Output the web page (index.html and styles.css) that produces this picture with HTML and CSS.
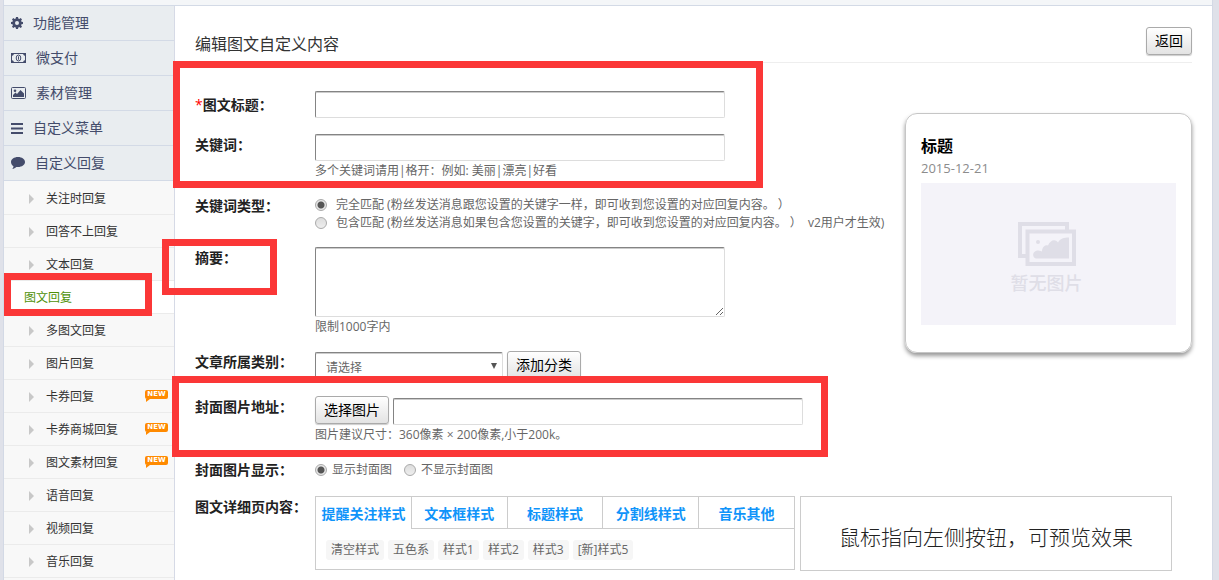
FILE: index.html
```html
<!DOCTYPE html>
<html lang="zh-CN">
<head>
    <meta charset="UTF-8">
    <title>编辑图文自定义内容</title>
    <link rel="stylesheet" href="styles.css">
</head>
<body>
    <div class="container">
        <div class="topbar"></div>
        <div class="wrap">
            <nav class="sidebar">
                <a class="menu" href="#">
                    <svg width="12" height="12" viewBox="0 0 12 12"><path fill="currentColor" fill-rule="evenodd" d="M5 0h2l.3 1.6 1 .4 1.4-.9 1.3 1.3-.9 1.4.4 1L12 5v2l-1.5.3-.4 1 .9 1.4L9.700 11l-1.400-.9-1 .4L7 12H5l-.3-1.500-1-.4-1.400.9L1 9.700l.9-1.400-.4-1L0 7V5l1.500-.3.4-1L1 2.400 2.300 1.100l1.400.9 1-.4zM6 4a2 2 0 1 0 0 4 2 2 0 0 0 0-4z"/></svg>
                    功能管理</a>
                <a class="menu" href="#">
                    <svg width="15" height="10" viewBox="0 0 15 10"><path fill="none" stroke="currentColor" d="M.5.5h14v9H.5z"/><path fill="currentColor" d="M0 0h3a3 3 0 0 1-3 3zM15 0h-3a3 3 0 0 0 3 3zM0 10h3a3 3 0 0 0-3-3zM15 10h-3a3 3 0 0 1 3-3z"/><ellipse cx="7.500" cy="5" rx="2.300" ry="3" fill="none" stroke="currentColor"/><path stroke="currentColor" d="M7.500 3.300v3.400"/></svg>
                    微支付</a>
                <a class="menu" href="#">
                    <svg width="15" height="12" viewBox="0 0 15 12"><rect x=".5" y=".5" width="14" height="11" rx="1" fill="none" stroke="currentColor"/><circle cx="4" cy="3.800" r="1.300" fill="currentColor"/><path fill="currentColor" d="M2 10V8l2.500-2.500L6 7l3.500-4L13 6.500V10z"/></svg>
                    素材管理</a>
                <a class="menu" href="#">
                    <svg width="12" height="11" viewBox="0 0 12 11"><path fill="currentColor" d="M0 0h12v2H0zM0 4.500h12v2H0zM0 9h12v2H0z"/></svg>
                    自定义菜单</a>
                <a class="menu" href="#">
                    <svg width="14" height="12" viewBox="0 0 14 12"><path fill="currentColor" d="M7 0c4 0 7 2.200 7 5s-3 5-7 5c-.6 0-1.200 0-1.700-.1C4.200 11 3 11.700 1.300 12c.7-.8 1.100-1.600 1.200-2.800C1 8.300 0 6.700 0 5c0-2.800 3-5 7-5z"/></svg>
                    自定义回复</a>
                <div class="submenu">
                    <a href="#">关注时回复</a>
                    <a href="#">回答不上回复</a>
                    <a href="#">文本回复</a>
                    <a href="#" class="active">图文回复</a>
                    <a href="#">多图文回复</a>
                    <a href="#">图片回复</a>
                    <a href="#">卡券回复<span class="new">NEW</span></a>
                    <a href="#">卡券商城回复<span class="new">NEW</span></a>
                    <a href="#">图文素材回复<span class="new">NEW</span></a>
                    <a href="#">语音回复</a>
                    <a href="#">视频回复</a>
                    <a href="#">音乐回复</a>
                </div>
            </nav>

            <form class="main">
                <div class="header">
                    <h1>编辑图文自定义内容</h1>
                    <button type="button" class="btn">返回</button>
                </div>
                <div class="upper">
                    <div class="fields">
                        <div class="row row-center">
                            <label class="name" for="title"><span class="required">*</span>图文标题：</label>
                            <div class="field"><input type="text" class="text" id="title"></div>
                        </div>
                        <div class="row">
                            <label class="name" for="keyword">关键词：</label>
                            <div class="field">
                                <input type="text" class="text" id="keyword">
                                <p class="help">多个关键词请用|格开：例如: 美丽|漂亮|好看</p>
                            </div>
                        </div>
                        <div class="row">
                            <span class="name">关键词类型：</span>
                            <div class="field options">
                                <label class="option"><input type="radio" name="type" checked>完全匹配 (粉丝发送消息跟您设置的关键字一样，即可收到您设置的对应回复内容。 ）</label>
                                <label class="option"><input type="radio" name="type">包含匹配 (粉丝发送消息如果包含您设置的关键字，即可收到您设置的对应回复内容。 ）&nbsp; v2用户才生效)</label>
                            </div>
                        </div>
                        <div class="row">
                            <label class="name" for="summary">摘要：</label>
                            <div class="field">
                                <textarea class="text" id="summary"></textarea>
                                <p class="help">限制1000字内</p>
                            </div>
                        </div>
                        <div class="row">
                            <label class="name" for="category">文章所属类别：</label>
                            <div class="field inline">
                                <span class="select"><select id="category"><option>请选择</option></select></span>
                                <button type="button" class="btn">添加分类</button>
                            </div>
                        </div>
                        <div class="row">
                            <label class="name" for="cover">封面图片地址：</label>
                            <div class="field">
                                <div class="inline">
                                    <button type="button" class="btn">选择图片</button>
                                    <input type="text" class="text cover-input" id="cover">
                                </div>
                                <p class="help">图片建议尺寸：360像素 × 200像素,小于200k。</p>
                            </div>
                        </div>
                        <div class="row row-center">
                            <span class="name">封面图片显示：</span>
                            <div class="field choices">
                                <label><input type="radio" name="show" checked>显示封面图</label>
                                <label><input type="radio" name="show">不显示封面图</label>
                            </div>
                        </div>
                    </div>

                    <div class="preview">
                        <h2>标题</h2>
                        <p class="date">2015-12-21</p>
                        <div class="picture">
                            <svg width="58" height="44" viewBox="0 0 58 44">
                                <path fill="none" stroke="currentColor" stroke-width="4" d="M8 34H2V2h47v6"/>
                                <path fill="none" stroke="currentColor" stroke-width="4" d="M9.500 9.500h46.500v32.500h-46.500z"/>
                                <circle cx="20" cy="20" r="2" fill="currentColor"/>
                                <path fill="currentColor" d="M18 36.500c-4-1-4-7 1-8 2 0 3 0 5 1 0-4 3-7 6-6 2-5 7-7 10-3 2-4 6-5 11-5v21z"/>
                            </svg>
                            <span>暂无图片</span>
                        </div>
                    </div>
                </div>

                <div class="row">
                    <span class="name">图文详细页内容：</span>
                    <div class="styles">
                        <div class="tabs">
                            <button type="button" class="current">提醒关注样式</button>
                            <button type="button">文本框样式</button>
                            <button type="button">标题样式</button>
                            <button type="button">分割线样式</button>
                            <button type="button">音乐其他</button>
                        </div>
                        <div class="chips">
                            <button type="button">清空样式</button>
                            <button type="button">五色系</button>
                            <button type="button">样式1</button>
                            <button type="button">样式2</button>
                            <button type="button">样式3</button>
                            <button type="button">[新]样式5</button>
                        </div>
                    </div>
                    <div class="hover-preview">鼠标指向左侧按钮，可预览效果</div>
                </div>
            </form>
        </div>

        <div class="mark mark-title"></div>
        <div class="mark mark-summary"></div>
        <div class="mark mark-menu"></div>
        <div class="mark mark-cover"></div>
    </div>
</body>
</html>
```

FILE: styles.css
```css
* { box-sizing: border-box; }
body { margin: 0; background: #dfe1e9; color: #666; font: 12px/18px "Open Sans", "Noto Sans CJK SC", sans-serif; overflow: hidden; }
h1, h2, p { margin: 0; }
a { text-decoration: none; }
button, input, select, textarea { font-family: inherit; }

.container { position: relative; display: flex; flex-direction: column; min-height: 100vh; margin: 0 6px 0 3px; border: solid #d3d9e5; border-width: 0 1px; background: #fff; }
.topbar { height: 6px; background: #f4f6f8; border-bottom: 1px solid #d3dae6; }
.wrap { display: flex; flex: 1; }

/* sidebar */
.sidebar { flex: none; width: 171px; background: #f8f8f8; border-right: 1px solid #d6dae6; }
.menu { display: flex; align-items: center; gap: 10px; height: 35px; padding-left: 7px; background: #e9edf0; border-bottom: 1px solid #d3dae6; color: #444c6b; font-size: 14px; }
.submenu { padding-top: 1px; }
.submenu a { position: relative; display: flex; align-items: center; height: 33px; padding: 2px 0 0 42px; border-bottom: 1px solid #ebebeb; color: #333; }
.submenu a::before { content: ""; position: absolute; left: 25px; border: solid transparent; border-width: 5px 0 5px 5px; border-left-color: #c8c8c8; }
.submenu a.active { padding-left: 20px; background: #fff; color: #4f9108; }
.submenu a.active::before { display: none; }
.new { position: absolute; right: 6px; top: 10px; width: 23px; height: 9px; border-radius: 2px; background: #ff8a00; color: #fff; font: bold 7px/9px "DejaVu Sans", sans-serif; text-align: center; }
.new::after { content: ""; position: absolute; left: 1px; top: 9px; border: solid transparent; border-width: 3px 4px 0 0; border-top-color: #ff8a00; }

/* main */
.main { flex: 1; min-width: 0; padding: 21px 20px 8px; }
.header { display: flex; align-items: flex-end; justify-content: space-between; padding-bottom: 7px; border-bottom: 1px solid #eee; }
.header h1 { color: #333; font-size: 16px; font-weight: normal; line-height: 22px; }
.btn { flex: none; height: 28px; padding: 0 8px; border: 1px solid #aaa; border-radius: 3px; background: linear-gradient(#fff, #e3e3e3); box-shadow: 0 1px 1px #ccc; color: #000; font-size: 14px; line-height: 24px; }

.upper { display: flex; justify-content: space-between; padding-top: 28px; }
.fields { flex: 1; }
.row { display: flex; margin-bottom: 16px; }
.fields .row:last-child { margin-bottom: 15px; }
.row-center { align-items: center; }
.name { flex: none; width: 120px; color: #222; font-size: 14px; font-weight: bold; line-height: 22px; }
.required { color: red; font-weight: normal; }
.text { display: block; width: 410px; height: 27px; padding: 3px; border: 1px solid; border-color: #848484 #ddd #ddd #848484; border-radius: 2px; background: #fff; box-shadow: inset 0 1px 0 #ccc; font-size: 12px; }
textarea.text { height: 70px; }
.help { margin-bottom: -2px; line-height: 20px; }
.inline { display: flex; gap: 4px; height: 29px; }
.cover-input { margin-top: 2px; }

.options { height: 36px; padding-top: 1px; }
.option { display: flex; align-items: center; white-space: nowrap; }
input[type=radio] { appearance: none; flex: none; width: 12px; height: 12px; margin: 0 9px 0 0; border: 1px solid #aaa; border-radius: 50%; background: linear-gradient(#ddd, #eee); }
input[type=radio]:checked { background: radial-gradient(circle, #555 0 3px, #e6e6e6 4px); }
.choices { display: flex; gap: 12px; }
.choices label { display: flex; align-items: center; line-height: 22px; }
.choices input[type=radio] { margin-right: 5px; }

.select { position: relative; }
.select select { appearance: none; width: 188px; height: 28px; margin-top: 1px; padding: 2px 10px 0; border: 1px solid; border-color: #848484 #ddd #ddd #848484; border-radius: 2px; background: #fff; box-shadow: inset 0 1px 0 #ccc; color: #666; font-size: 12px; }
.select::after { content: ""; position: absolute; right: 6px; top: 12px; border: solid transparent; border-width: 6px 3px 0; border-top-color: #555; }

/* article preview */
.preview { flex: none; width: 287px; height: 240px; margin-top: 22px; padding: 20px 15px; border: 1px solid #c6c6c6; border-radius: 12px; box-shadow: 0 3px 4px #999; }
.preview h2 { color: #000; font-size: 16px; line-height: 24px; }
.date { margin-bottom: 5px; color: #8c8c8c; font-size: 13px; line-height: 20px; }
.picture { display: flex; flex-direction: column; align-items: center; height: 142px; padding: 39px 4px 0 0; background: #f4f3f9; color: #dfdee7; }
.picture span { margin-top: 5px; font-size: 18px; font-weight: 500; line-height: 24px; }

/* style picker */
.styles { width: 480px; height: 74px; border: 1px solid #ccc; }
.tabs { display: flex; }
.tabs button { flex: 1; height: 32px; padding: 0; border: solid #ccc; border-width: 0 0 1px 1px; background: #fff; color: #0f94fa; font-size: 14px; font-weight: bold; white-space: nowrap; }
.tabs button:first-child { border-left: 0; }
.tabs .current { border-bottom-color: transparent; }
.chips { display: flex; gap: 4px; padding: 11px 10px; }
.chips button { height: 20px; padding: 0 5px; border: 0; border-radius: 3px; background: #f6f6f6; color: #666; font-size: 12px; line-height: 20px; }
.hover-preview { display: flex; align-items: center; justify-content: center; width: 372px; height: 75px; margin-left: 5px; padding-top: 4px; border: 1px solid #ccc; color: #222; font-size: 21px; font-weight: 300; font-family: "Noto Sans CJK SC", sans-serif; }

/* red frames over the page */
.mark { position: absolute; border: 7px solid #fb3737; pointer-events: none; }
.mark-title { left: 169px; top: 61px; width: 590px; height: 127px; }
.mark-summary { left: 158px; top: 239px; width: 115px; height: 56px; }
.mark-menu { left: 0; top: 273px; width: 148px; height: 43px; }
.mark-cover { left: 168px; top: 376px; width: 656px; height: 81px; }
```
